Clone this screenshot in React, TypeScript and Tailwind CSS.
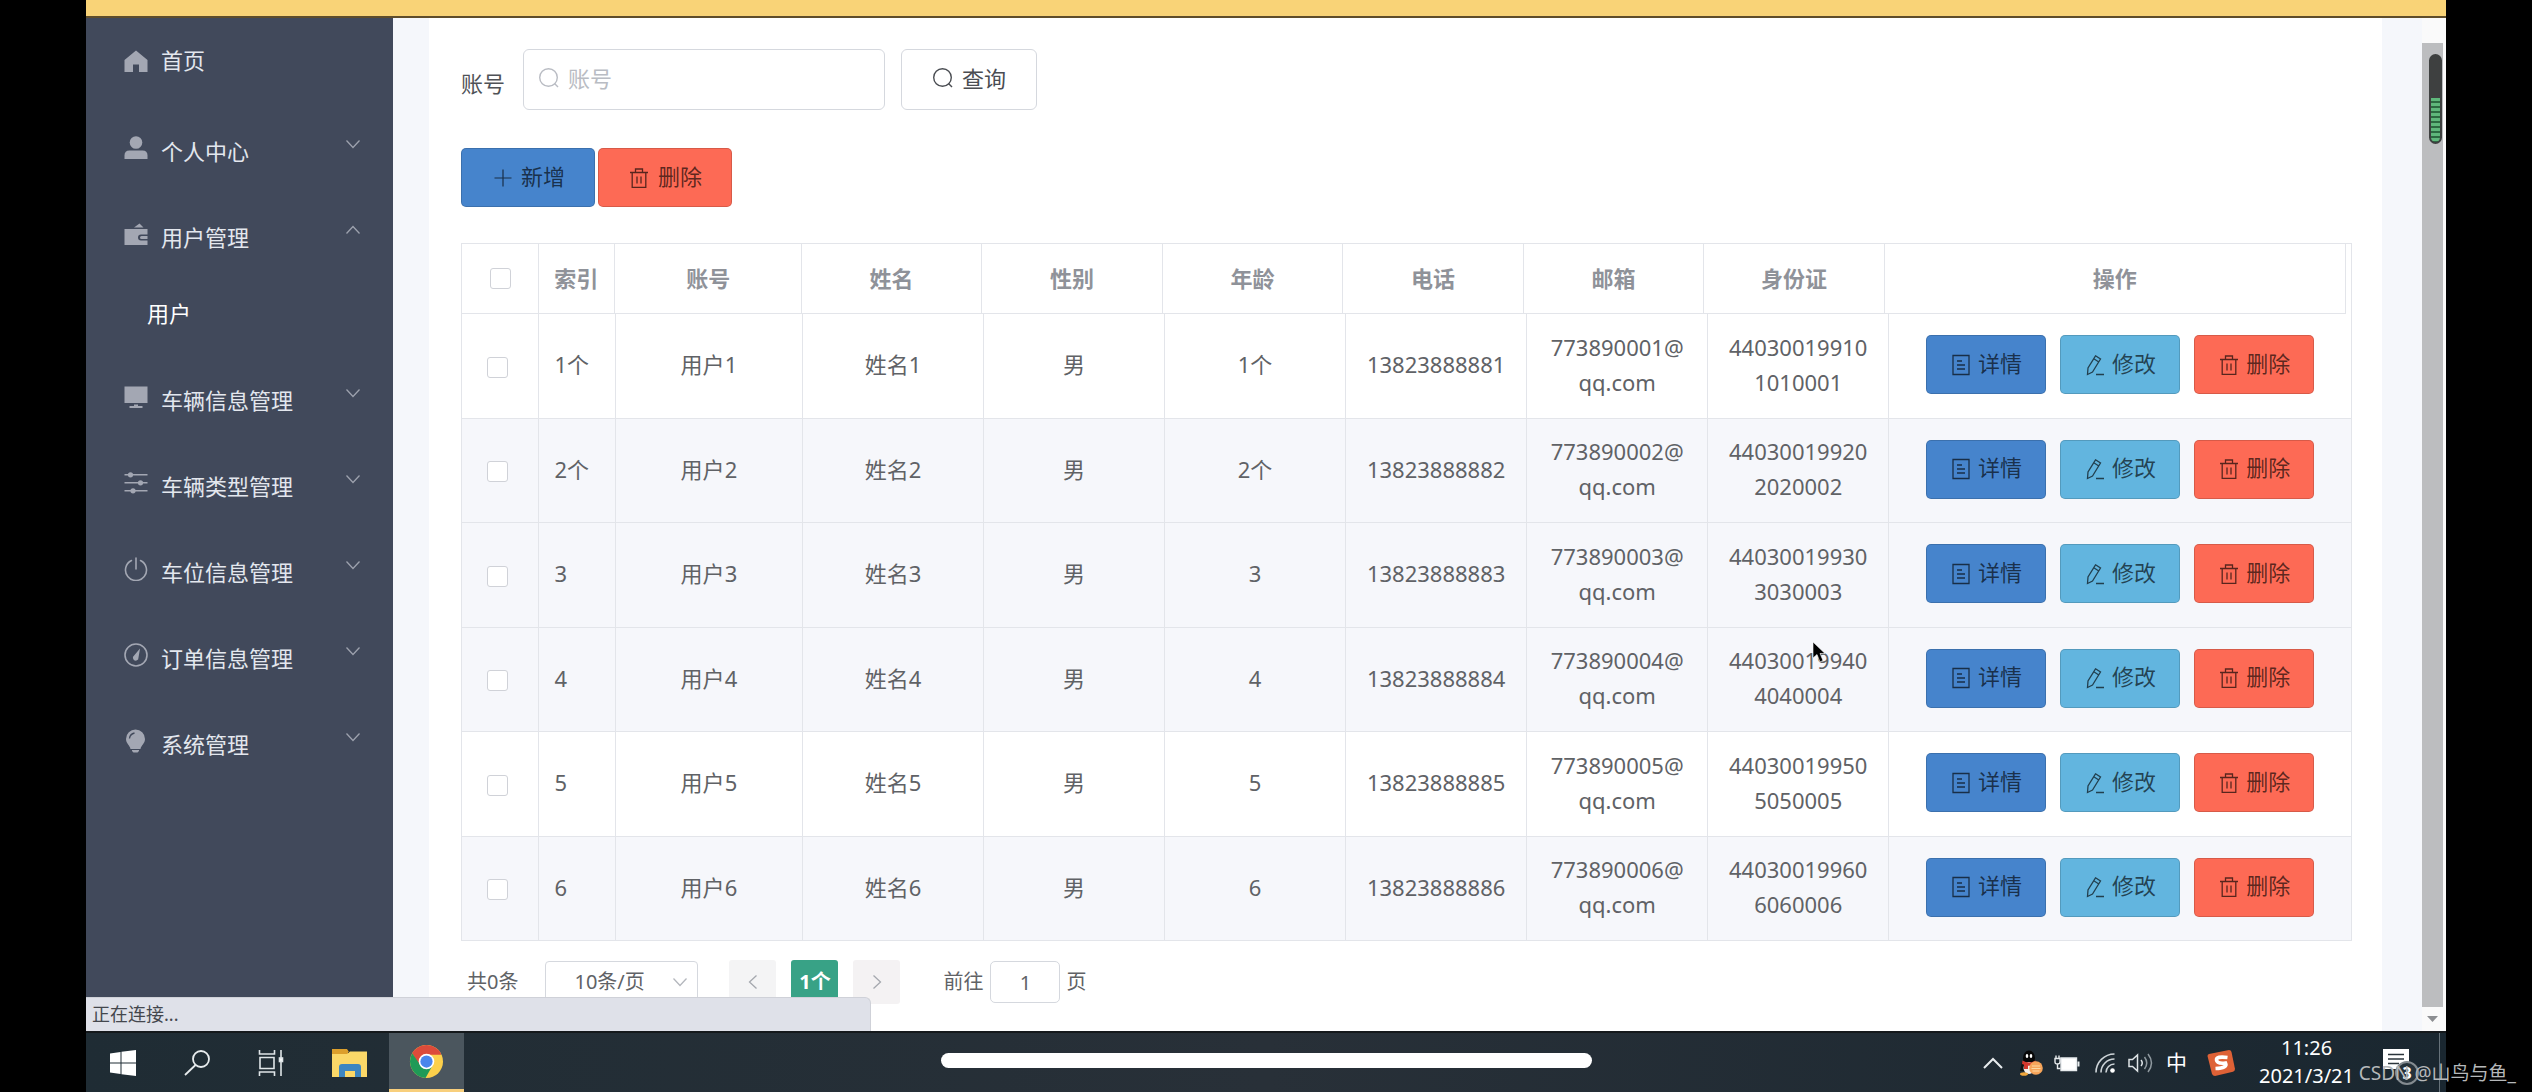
import type { ReactNode } from 'react'

type IconProps = { className?: string }

const users = [
    { id: 1, index: '1个', age: '1个', phone: '13823888881', mail: '773890001@', card: '440300199101010001', striped: false },
    { id: 2, index: '2个', age: '2个', phone: '13823888882', mail: '773890002@', card: '440300199202020002', striped: true },
    { id: 3, index: '3', age: '3', phone: '13823888883', mail: '773890003@', card: '440300199303030003', striped: true },
    { id: 4, index: '4', age: '4', phone: '13823888884', mail: '773890004@', card: '440300199404040004', striped: true },
    { id: 5, index: '5', age: '5', phone: '13823888885', mail: '773890005@', card: '440300199505050005', striped: false },
    { id: 6, index: '6', age: '6', phone: '13823888886', mail: '773890006@', card: '440300199606060006', striped: true },
]

/* ---------- Icons ---------- */

function HomeIcon() {
    return (
        <svg viewBox="0 0 24 24" className="size-6" fill="currentColor">
            <path d="M12 1.5 23.5 11v12H15v-7.5H9V23H.5V11z" />
        </svg>
    )
}

function UserIcon() {
    return (
        <svg viewBox="0 0 24 24" className="size-6" fill="currentColor">
            <ellipse cx="12" cy="6.5" rx="6.3" ry="6.3" />
            <path d="M.5 23v-3.5q0-5 5-5h13q5 0 5 5V23z" />
        </svg>
    )
}

function WalletIcon() {
    return (
        <svg viewBox="0 0 24 24" className="size-6" fill="currentColor">
            <path d="M10 5.5 15.500 1.500l4 4z" />
            <path fillRule="evenodd" d="M.5 7h23v5.5H17a3 3 0 0 0 0 6h6.500V23H.5z" />
            <path d="M17.500 14h6v3h-6a1.500 1.500 0 0 1 0-3z" />
        </svg>
    )
}

function MonitorIcon() {
    return (
        <svg viewBox="0 0 24 24" className="size-6" fill="currentColor">
            <path d="M.5 1.500h23v16.500H.5zM10 19.500h4v1.500h4.500v2h-13v-2H10z" />
        </svg>
    )
}

function SlidersIcon() {
    return (
        <svg viewBox="0 0 24 24" className="size-6" fill="currentColor">
            <path d="M.5 3h23v1.600H.5zM.5 11h23v1.600H.5zM.5 19h23v1.600H.5z" />
            <circle cx="6.500" cy="3.800" r="2.600" />
            <circle cx="16.500" cy="11.800" r="2.600" />
            <circle cx="9" cy="19.800" r="2.600" />
        </svg>
    )
}

function PowerIcon() {
    return (
        <svg viewBox="0 0 24 24" className="size-6" fill="none" stroke="currentColor" strokeWidth="1.600" strokeLinecap="round">
            <path d="M12 1v11M7.500 3.500a10.500 10.500 0 1 0 9 0" />
        </svg>
    )
}

function OdometerIcon() {
    return (
        <svg viewBox="0 0 24 24" className="size-6" fill="none" stroke="currentColor" strokeWidth="1.600">
            <circle cx="12" cy="12" r="11" />
            <path d="M16 5.500 14.500 14.500a2.800 2.800 0 1 1-4.400-2z" fill="currentColor" stroke="none" />
        </svg>
    )
}

function BulbIcon() {
    return (
        <svg viewBox="0 0 24 24" className="size-6" fill="currentColor">
            <path d="M11.500.5a9.500 9.500 0 0 1 9.500 9.500c0 4.500-3.700 6-4.500 10h-10C5.700 16 2 14.500 2 10A9.500 9.500 0 0 1 11.500.5zM8 21h7v1l-1.500 1.500h-4L8 22z" />
            <path d="M5.500 9.500q.5-4.500 5-5.500" fill="none" stroke="#41495b" strokeWidth="1.300" />
        </svg>
    )
}

function Chevron({ className }: IconProps) {
    return (
        <svg viewBox="0 0 16 16" className={className} fill="none" stroke="currentColor" strokeWidth="1.300">
            <path d="m1.500 4.500 6.500 7 6.500-7" />
        </svg>
    )
}

function SearchIcon() {
    return (
        <svg viewBox="0 0 22 22" className="size-[22px] shrink-0" fill="none" stroke="currentColor" strokeWidth="1.400">
            <circle cx="10.500" cy="10.500" r="8.800" />
            <path d="m16.500 16.500 3.500 3.500" />
        </svg>
    )
}

function PlusIcon() {
    return (
        <svg viewBox="0 0 22 22" className="size-[22px] shrink-0" fill="none" stroke="currentColor" strokeWidth="1.200">
            <path d="M12 2.500v17M3.500 11h17" />
        </svg>
    )
}

function TrashIcon() {
    return (
        <svg viewBox="0 0 22 22" className="size-[22px] shrink-0" fill="none" stroke="currentColor" strokeWidth="1.300">
            <path d="M2 5.500h18M4.200 5.500v14.800h13.600V5.500M7.500 5.500V2h7v3.500M9 9.500v7M13 9.500v7" />
        </svg>
    )
}

function DocIcon() {
    return (
        <svg viewBox="0 0 22 22" className="size-[22px] shrink-0" fill="none" stroke="currentColor" strokeWidth="1.300">
            <path d="M3 1.500h16v19H3zM7 7h5M7 11h8M7 15h8" />
        </svg>
    )
}

function EditIcon() {
    return (
        <svg viewBox="0 0 22 22" className="size-[22px] shrink-0" fill="none" stroke="currentColor" strokeWidth="1.300">
            <path d="M11.500 1.800 16.500 5 8.500 18l-5 2.500L4 14zM9.800 4.800l5 3.200M12 20.500h8" />
        </svg>
    )
}

/* ---------- Sidebar ---------- */

function MenuItem({ icon, label, open }: { icon: ReactNode; label: string; open?: boolean }) {
    return (
        <button type="button" className="flex h-[86px] w-full items-center pr-[32px] pl-[38px] text-left">
            <span className="mb-2 text-[#a3a7b3]">{icon}</span>
            <span className="ml-[13px] flex-1 pb-[3px]">{label}</span>
            <Chevron className={open ? 'mb-4 size-4 rotate-180 text-[#9da2ae]' : 'mb-4 size-4 text-[#9da2ae]'} />
        </button>
    )
}

function Sidebar() {
    return (
        <nav className="w-[307px] shrink-0 bg-[#41495b] text-[22px] leading-8 text-[#e3e7ee]">
            <a href="#home" className="mb-[5px] flex h-[86px] items-center pl-[38px]">
                <span className="text-[#a3a7b3]"><HomeIcon /></span>
                <span className="ml-[13px] pb-[3px]">首页</span>
            </a>
            <MenuItem icon={<UserIcon />} label="个人中心" />
            <MenuItem icon={<WalletIcon />} label="用户管理" open />
            <a href="#users" className="mb-[11px] flex h-[66px] items-center pb-[3px] pl-[61px] text-white">用户</a>
            <MenuItem icon={<MonitorIcon />} label="车辆信息管理" />
            <MenuItem icon={<SlidersIcon />} label="车辆类型管理" />
            <MenuItem icon={<PowerIcon />} label="车位信息管理" />
            <MenuItem icon={<OdometerIcon />} label="订单信息管理" />
            <MenuItem icon={<BulbIcon />} label="系统管理" />
        </nav>
    )
}

/* ---------- Table ---------- */

function Columns() {
    return (
        <colgroup>
            <col className="w-[77px]" />
            <col className="w-[76px]" />
            <col className="w-[186px]" />
            <col className="w-[180px]" />
            <col className="w-[180px]" />
            <col className="w-[180px]" />
            <col className="w-[180px]" />
            <col className="w-[180px]" />
            <col className="w-[180px]" />
            <col className="w-[460px]" />
        </colgroup>
    )
}

function Check({ label }: { label: string }) {
    return (
        <input
            type="checkbox"
            aria-label={label}
            className="block size-[21px] appearance-none rounded-[3px] border border-[#d0d2d8] bg-white checked:bg-[#4684cc]"
        />
    )
}

function RowButton({ icon, label, color }: { icon: ReactNode; label: string; color: string }) {
    return (
        <button type="button" className={`flex h-[59px] items-center gap-1.5 rounded-[5px] border border-black/15 px-[23px] text-black/65 ${color}`}>
            {icon}
            <span className="pb-[3px]">{label}</span>
        </button>
    )
}

function UserTable() {
    const head = ['账号', '姓名', '性别', '年龄', '电话', '邮箱', '身份证', '操作']
    const th = 'border-r border-b border-[#e3e5ea] font-bold'
    const td = 'border-r border-b border-[#e3e5ea] px-[18px] pb-[3px] text-center'

    return (
        <div className="mt-9 border-t border-l border-[#e3e5ea] text-[22px] leading-[35px]">
            <div className="border-r border-[#e3e5ea] pr-[5px]">
                <table className="w-full table-fixed border-separate border-spacing-0 text-[#8f9299]">
                    <Columns />
                    <thead>
                        <tr className="h-[70px]">
                            <th className={th}><span className="flex justify-center"><Check label="全选" /></span></th>
                            <th className={`${th} pl-[15px] text-left`}>索引</th>
                            {head.map((h) => (
                                <th key={h} className={th}>{h}</th>
                            ))}
                        </tr>
                    </thead>
                </table>
            </div>
            <table className="w-full table-fixed border-separate border-spacing-0 text-[#606266]">
                <Columns />
                <tbody>
                    {users.map((u) => (
                        <tr key={u.id} className={u.striped ? 'bg-[#f6f7fb] odd:h-[105px] even:h-[104px]' : 'bg-white odd:h-[105px] even:h-[104px]'}>
                            <td className="border-r border-b border-[#e3e5ea] pt-0.5 pr-1.5"><span className="flex justify-center"><Check label={`选择用户${u.id}`} /></span></td>
                            <td className="border-r border-b border-[#e3e5ea] pb-[3px] pl-[15px]">{u.index}</td>
                            <td className={td}>用户{u.id}</td>
                            <td className={td}>姓名{u.id}</td>
                            <td className={td}>男</td>
                            <td className={td}>{u.age}</td>
                            <td className={td}>{u.phone}</td>
                            <td className={td}>{u.mail}<wbr />qq.com</td>
                            <td className={`${td} break-all`}>{u.card}</td>
                            <td className={td}>
                                <div className="flex justify-center gap-3.5">
                                    <RowButton icon={<DocIcon />} label="详情" color="bg-[#4684cc]" />
                                    <RowButton icon={<EditIcon />} label="修改" color="bg-[#62b5df]" />
                                    <RowButton icon={<TrashIcon />} label="删除" color="bg-[#fd6a55]" />
                                </div>
                            </td>
                        </tr>
                    ))}
                </tbody>
            </table>
        </div>
    )
}

function Pagination() {
    return (
        <div className="mt-[19px] flex h-[44px] items-center pl-1.5 text-[20px] leading-7 text-[#606266]">
            <span>共0条</span>
            <div className="relative ml-[27px]">
                <select aria-label="每页条数" className="h-[42px] w-[153px] appearance-none rounded-[4px] border border-[#d5d8de] bg-white pl-[28px]">
                    <option>10条/页</option>
                </select>
                <Chevron className="pointer-events-none absolute top-[13px] right-[10px] size-4 text-[#b4b7bd]" />
            </div>
            <button type="button" aria-label="上一页" className="ml-[31px] flex h-[44px] w-[47px] items-center justify-center rounded-[3px] bg-[#f4f4f5]">
                <Chevron className="size-4 rotate-90 text-[#a5a8ae]" />
            </button>
            <button type="button" className="ml-[15px] h-[44px] w-[47px] rounded-[3px] bg-[#38a286] font-bold text-white">1个</button>
            <button type="button" aria-label="下一页" className="ml-[15px] flex h-[44px] w-[47px] items-center justify-center rounded-[3px] bg-[#f4f2f3]">
                <Chevron className="size-4 -rotate-90 text-[#a5a8ae]" />
            </button>
            <label htmlFor="page" className="ml-[43px]">前往</label>
            <input id="page" defaultValue="1" className="ml-[7px] h-[42px] w-[70px] rounded-[5px] border border-[#d5d8de] text-center" />
            <span className="ml-[6px]">页</span>
        </div>
    )
}

/* ---------- Windows taskbar ---------- */

function Taskbar() {
    return (
        <footer className="relative flex h-[61px] shrink-0 items-center justify-between border-t-2 border-[#15191c] bg-linear-to-r from-[#1f2c34] via-[#283038] to-[#1a2730] text-white">
            <div className="flex h-full items-center">
                <button type="button" aria-label="开始" className="flex w-[74px] justify-center">
                    <svg viewBox="0 0 26 26" className="size-[26px]" fill="#fff">
                        <path d="M0 3.500 10.500 2v10.500H0zM11.500 1.800 26 0v12.500H11.500zM0 13.500h10.500V24L0 22.500zM11.500 13.500H26V26l-14.500-1.800z" />
                    </svg>
                </button>
                <button type="button" aria-label="搜索" className="flex w-[74px] justify-center">
                    <svg viewBox="0 0 26 26" className="size-[26px]" fill="none" stroke="#e8ecee" strokeWidth="1.800">
                        <circle cx="17" cy="9" r="8" />
                        <path d="M11.500 15 1 25" />
                    </svg>
                </button>
                <button type="button" aria-label="任务视图" className="flex w-[74px] justify-center">
                    <svg viewBox="0 0 26 26" className="size-[26px]" fill="none" stroke="#dfe5e8" strokeWidth="1.600">
                        <path d="M1.500 0v4h15V0M1.500 26v-4h15v4M2 7.500h14v11H2zM23 0v26" />
                        <rect x="21.500" y="8" width="3" height="3.500" fill="#fff" />
                    </svg>
                </button>
                <button type="button" aria-label="文件资源管理器" className="flex w-[81px] justify-center pl-0.5">
                    <svg viewBox="0 0 36 30" className="h-[30px] w-9">
                        <path d="M0 1h15l2 3h-1v6H0z" fill="#dc9f2c" />
                        <path d="M0 6h15l3-2.500h17V29H0z" fill="#fbd868" />
                        <path d="M7 29V19q0-3 3-3h16q3 0 3 3v10h-6v-6H13v6z" fill="#3d86c1" />
                    </svg>
                </button>
                <button type="button" aria-label="Chrome" className="flex h-full w-[75px] items-center justify-center border-b-[3px] border-[#f8cf7c] bg-[#4b565e]">
                    <svg viewBox="0 0 36 36" className="size-[35px]">
                        <circle cx="18" cy="18" r="17" fill="#fcd04b" />
                        <path d="M3.300 9.500A17 17 0 0 1 32.700 9.500L33 11H18L10.500 22z" fill="#dd4b3a" />
                        <path d="M3.300 9.500A17 17 0 0 0 17 35l7.500-13.500L18 25.500l-6-3.500z" fill="#1f9a57" />
                        <circle cx="18" cy="18" r="8" fill="#fff" />
                        <circle cx="18" cy="18" r="6.300" fill="#4a86ec" />
                    </svg>
                </button>
            </div>

            {/* Home indicator */}
            <div className="absolute top-5 left-[855px] h-[15px] w-[651px] rounded-full bg-white" />

            <div className="flex h-full items-center pr-[6px]">
                <svg viewBox="0 0 20 12" className="h-3 w-5" fill="none" stroke="#e8ecee" strokeWidth="2">
                    <path d="m1 11 9-9 9 9" />
                </svg>
                <svg viewBox="0 0 24 26" className="ml-4 h-[26px] w-6">
                    <ellipse cx="10" cy="8" rx="6" ry="7.500" fill="#070707" />
                    <path d="M3 12h14l2 9H1z" fill="#111" />
                    <ellipse cx="10" cy="18" rx="5.500" ry="6" fill="#f4f0ec" />
                    <path d="M3.500 10.500q6.500 4 13 0l.5 3.500q-7 3.500-14 0zM5 13h4v6H5z" fill="#d3382d" />
                    <ellipse cx="8" cy="6" rx="1.300" ry="2" fill="#fff" />
                    <ellipse cx="12" cy="6" rx="1.300" ry="2" fill="#fff" />
                    <ellipse cx="5" cy="24" rx="4" ry="1.800" fill="#f0a63c" />
                    <circle cx="17" cy="18" r="6.800" fill="#f7a55a" />
                    <path d="M13 16h8M12.500 18.500h9M13.500 21h7" stroke="#fbd9a5" strokeWidth="1.200" />
                </svg>
                <svg viewBox="0 0 26 20" className="ml-[11px] h-5 w-[26px]">
                    <path d="M1 5.500h5v3.500q0 2-2.500 2T1 9zM2 2.500v3M5 2.500v3M3.500 11v4.500h3" fill="none" stroke="#e8ecee" strokeWidth="1.400" />
                    <path d="M7 5h15.500v12.500H7z" fill="#fff" stroke="#e8ecee" strokeWidth="1.400" />
                    <path d="M23.500 8.500h2v5h-2z" fill="#e8ecee" />
                </svg>
                <svg viewBox="0 0 22 22" className="ml-[14px] size-[22px]" fill="none" stroke="#cdd4d8" strokeWidth="1.600">
                    <path d="M2 20.500A18.500 18.500 0 0 1 20.500 2M7 20.500A13.500 13.500 0 0 1 20.500 7M12 20.500a8.500 8.500 0 0 1 8.500-8.500" />
                    <circle cx="18.500" cy="18.500" r="2.300" fill="#fff" stroke="none" />
                </svg>
                <svg viewBox="0 0 26 22" className="ml-3 h-[22px] w-[26px]" fill="none" stroke="#dfe5e8" strokeWidth="1.500">
                    <path d="M1 7.500h3.500L9.500 3v16l-5-4.500H1zM13 8q2.500 3 0 6" />
                    <path d="M16.500 5q4.500 6 0 12M20 2q7 9 0 18" stroke="#8f999f" />
                </svg>
                <span className="ml-3 pb-0.5 text-[21px] leading-6">中</span>
                <svg viewBox="0 0 28 26" className="ml-5 h-[26px] w-7">
                    <path d="m2 4 20-4q2 0 2.500 2L28 19q0 2-2 2.800L8 26q-2 0-3-2L.5 6Q.5 4.500 2 4z" fill="#de6136" />
                    <path d="M20.500 7.500Q9 6 9.500 10t9 3q2.500 5-10 5.500" fill="none" stroke="#fff" strokeWidth="3.600" />
                </svg>
                <div className="ml-6 pb-0.5 text-center text-[20px] leading-7">
                    <p>11:26</p>
                    <p>2021/3/21</p>
                </div>
                <div className="relative ml-[29px] mb-1">
                    <svg viewBox="0 0 26 24" className="h-6 w-[26px]">
                        <path d="M0 0h26v20h-8l-4 4v-4H0z" fill="#fff" />
                        <path d="M5 5.500h16M5 10h16M5 14.500h11" stroke="#2a343b" strokeWidth="1.600" />
                    </svg>
                    <span className="absolute top-3 left-3 flex size-6 items-center justify-center rounded-full border-2 border-[#848b90] bg-[#26323a] text-[16px] leading-5 font-bold">3</span>
                </div>
                <div className="ml-[30px] h-full w-px bg-[#66727a]" />
            </div>
        </footer>
    )
}

export default function App() {
    return (
        <div className="relative flex h-screen flex-col overflow-hidden bg-black px-[86px] font-['Noto_Sans','Noto_Sans_CJK_SC',sans-serif]">
            <div className="h-[18px] shrink-0 border-b-2 border-[#5f4d2a] bg-[#f9d377]" />

            <div className="relative flex min-h-0 flex-1 overflow-hidden">
                <Sidebar />

                <div className="flex min-w-0 flex-1 bg-[#f5f7fb] pl-9">
                    <main className="min-w-0 flex-1 bg-white pt-[31px] pr-[30px] pl-8">
                        <form className="flex items-center text-[22px] leading-8">
                            <label htmlFor="account" className="pt-1.5 text-[#4f5257]">账号</label>
                            <div className="ml-[18px] flex h-[61px] w-[362px] items-center rounded-[6px] border border-[#d5d8de] px-[14px] pb-[3px] text-[#b9bcc3]">
                                <SearchIcon />
                                <input id="account" placeholder="账号" className="ml-2 min-w-0 flex-1 outline-none placeholder:text-[#b9bcc3]" />
                            </div>
                            <button type="button" className="ml-4 flex h-[61px] items-center gap-2 rounded-[6px] border border-[#d5d8de] px-[30px] pb-[3px] text-[#4a4d52]">
                                <SearchIcon />
                                查询
                            </button>
                        </form>

                        <div className="mt-[38px] flex gap-[3px] text-[22px] leading-8 text-black/65">
                            <button type="button" className="flex h-[59px] items-center gap-2 rounded-[5px] border border-black/15 bg-[#4684cc] px-[29px]">
                                <PlusIcon />
                                <span className="pb-[3px]">新增</span>
                            </button>
                            <button type="button" className="flex h-[59px] items-center gap-2 rounded-[5px] border border-black/15 bg-[#fd6a55] px-[29px]">
                                <TrashIcon />
                                <span className="pb-[3px]">删除</span>
                            </button>
                        </div>

                        <UserTable />
                        <Pagination />
                    </main>

                    {/* Browser scrollbar */}
                    <div className="ml-10 flex w-6 flex-col items-start bg-[#fafafa] pt-[25px]">
                        <div className="w-[21px] flex-1 bg-[#bcbdbf]" />
                        <svg viewBox="0 0 21 24" className="h-6 w-[21px]">
                            <path d="M5 9h11l-5.500 6z" fill="#8d8f92" />
                        </svg>
                    </div>
                </div>

                {/* Screen recorder level meter */}
                <div className="absolute top-9 right-1 flex h-[90px] w-[13px] flex-col justify-end overflow-hidden rounded-full border-2 border-[#3e4040] bg-[#3e4040]">
                    <div className="h-[44px] bg-[repeating-linear-gradient(#5fb87c_0_3px,#2c6b42_3px_5px)]" />
                </div>

                {/* Mouse pointer */}
                <svg viewBox="0 0 14 22" className="absolute top-[623px] left-[1726px] h-[22px] w-[14px]">
                    <path d="M1 1v16l4-3.500L8 21l3-1.500L8 12.500h5z" fill="#000" stroke="#fff" strokeWidth=".6" />
                </svg>

                {/* Browser status bubble */}
                <div className="absolute bottom-0 left-0 h-[34px] w-[785px] rounded-tr-[6px] border-t border-r border-[#cfd1d8] bg-[#dfe1e9] pl-1.5 text-[18px] leading-8 text-[#44474d]">正在连接...</div>
            </div>

            <Taskbar />

            <p className="absolute right-4 bottom-[5px] text-[19px] leading-7 text-[#b5b8ba]">CSDN @山鸟与鱼_</p>
        </div>
    )
}
